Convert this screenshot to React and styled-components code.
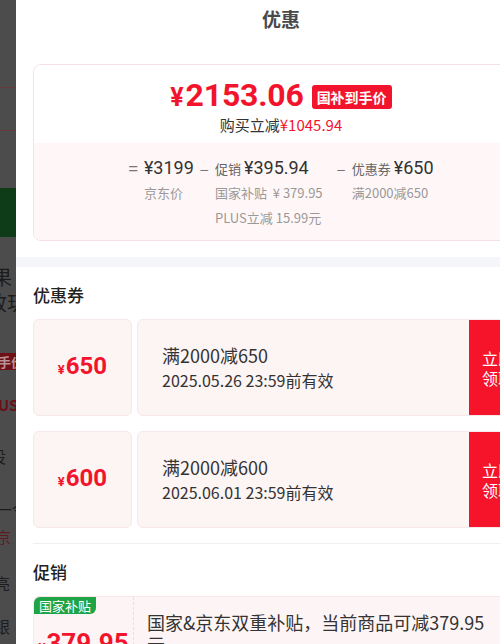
import React from "react";
import styled, { createGlobalStyle } from "styled-components";

const GlobalStyle = createGlobalStyle`
  html, body {
    margin: 0;
    padding: 0;
    background: #fff;
  }
  body {
    width: 500px;
    height: 644px;
    overflow: hidden;
    font-family: "Noto Sans CJK SC", "Noto Sans", sans-serif;
    color: #333;
  }
  * { box-sizing: border-box; }
`;

const RED = "#f2142c";

const coupons = [
  { id: 1, amount: "650", rule: "满2000减650", expire: "2025.05.26 23:59前有效" },
  { id: 2, amount: "600", rule: "满2000减600", expire: "2025.06.01 23:59前有效" },
];

const stripItems = [
  { id: "l1", kind: "line", mt: 87 },
  { id: "l2", kind: "line", mt: 42 },
  { id: "g", kind: "block", mt: 57, h: 49, bg: "#0e3b18" },
  { id: "t1", kind: "text", mt: 28, x: -8, text: "果" },
  { id: "t2", kind: "text", mt: 2, x: -13, text: "致玥" },
  { id: "r", kind: "tag", mt: 38, x: -10, text: "手价" },
  { id: "t3", kind: "text", mt: 26, x: -2, text: "US", color: "#6b1017", size: 15, bold: true },
  { id: "t4", kind: "text", mt: 33, x: -10, text: "设", size: 16 },
  { id: "t5", kind: "text", mt: 35, x: -4, text: "一令", size: 16 },
  { id: "t6", kind: "text", mt: 10, x: -4, text: "京", color: "#5e1c21", size: 15 },
  { id: "t7", kind: "text", mt: 28, x: -6, text: "亮", size: 16 },
  { id: "t8", kind: "text", mt: 25, x: -6, text: "银", size: 16 },
];

export default function App() {
  return (
    <>
      <GlobalStyle />
      <Page>
        <Strip>
          {stripItems.map((it) => {
            if (it.kind === "line") return <StripLine key={it.id} $mt={it.mt} />;
            if (it.kind === "block")
              return <StripBlock key={it.id} $mt={it.mt} $h={it.h} $bg={it.bg} />;
            if (it.kind === "tag")
              return (
                <StripTag key={it.id} $mt={it.mt} $x={it.x}>
                  {it.text}
                </StripTag>
              );
            return (
              <StripText
                key={it.id}
                $mt={it.mt}
                $x={it.x}
                $color={it.color}
                $size={it.size}
                $bold={it.bold}
              >
                {it.text}
              </StripText>
            );
          })}
        </Strip>

        <Panel>
          <Header>优惠</Header>

          <Padded>
            <Summary>
              <SummaryTop>
                <PriceRow>
                  <BigPrice>
                    <BigYen>¥</BigYen>2153.06
                  </BigPrice>
                  <Badge>国补到手价</Badge>
                </PriceRow>
                <ReduceLine>
                  购买立减<em>¥1045.94</em>
                </ReduceLine>
              </SummaryTop>

              <SummaryBottom>
                <Col>
                  <Op>=</Op>
                  <Stack>
                    <MainLine>
                      <Value>¥3199</Value>
                    </MainLine>
                    <SubLine>京东价</SubLine>
                  </Stack>
                </Col>
                <Col>
                  <Op>–</Op>
                  <Stack>
                    <MainLine>
                      <Label>促销</Label>
                      <Value>¥395.94</Value>
                    </MainLine>
                    <SubLine>国家补贴&nbsp;&nbsp;¥ 379.95</SubLine>
                    <SubLine>PLUS立减 15.99元</SubLine>
                  </Stack>
                </Col>
                <Col $ml={8}>
                  <Op>–</Op>
                  <Stack>
                    <MainLine>
                      <Label>优惠券</Label>
                      <Value>¥650</Value>
                    </MainLine>
                    <SubLine>满2000减650</SubLine>
                  </Stack>
                </Col>
              </SummaryBottom>
            </Summary>
          </Padded>

          <Band />

          <Padded>
            <SectionTitle>优惠券</SectionTitle>
            <CouponList>
              {coupons.map((c) => (
                <Coupon key={c.id}>
                  <CouponLeft>
                    <Amount>
                      <small>¥</small>
                      {c.amount}
                    </Amount>
                  </CouponLeft>
                  <CouponMain>
                    <CouponInfo>
                      <Rule>{c.rule}</Rule>
                      <Expire>{c.expire}</Expire>
                    </CouponInfo>
                    <ClaimButton>
                      立即
                      <br />
                      领取
                    </ClaimButton>
                  </CouponMain>
                </Coupon>
              ))}
            </CouponList>

            <Divider />

            <SectionTitle>促销</SectionTitle>
            <PromoCard>
              <PromoLeft>
                <GreenTag>国家补贴</GreenTag>
                <Amount $big>
                  <small>¥</small>379.95
                </Amount>
              </PromoLeft>
              <PromoText>国家&amp;京东双重补贴，当前商品可减379.95元</PromoText>
            </PromoCard>
          </Padded>
        </Panel>
      </Page>
    </>
  );
}

const Page = styled.div`
  display: flex;
  align-items: flex-start;
  width: 500px;
  height: 644px;
  overflow: hidden;
`;

/* dimmed page behind the drawer */
const Strip = styled.div`
  width: 16px;
  height: 644px;
  flex-shrink: 0;
  background: #4c4c4c;
  display: flex;
  flex-direction: column;
  overflow: hidden;
`;

const StripLine = styled.div`
  flex-shrink: 0;
  height: 1px;
  margin-top: ${(p) => p.$mt}px;
  background: #673a3e;
`;

const StripBlock = styled.div`
  flex-shrink: 0;
  height: ${(p) => p.$h}px;
  margin-top: ${(p) => p.$mt}px;
  background: ${(p) => p.$bg};
`;

const StripText = styled.div`
  flex-shrink: 0;
  margin-top: ${(p) => p.$mt}px;
  margin-left: ${(p) => p.$x}px;
  white-space: nowrap;
  font-size: ${(p) => p.$size || 20}px;
  line-height: ${(p) => (p.$size ? 18 : 24)}px;
  font-weight: ${(p) => (p.$bold ? 700 : 400)};
  color: ${(p) => p.$color || "#1c1c1c"};
`;

const StripTag = styled.div`
  flex-shrink: 0;
  margin-top: ${(p) => p.$mt}px;
  margin-left: ${(p) => p.$x}px;
  width: 40px;
  height: 17px;
  line-height: 17px;
  background: #6e1015;
  color: #b89395;
  font-size: 13px;
  font-weight: 700;
  white-space: nowrap;
  padding-left: 8px;
`;

const Panel = styled.div`
  width: 530px;
  flex-shrink: 0;
  background: #fff;
`;

const Header = styled.div`
  height: 64px;
  padding-top: 5px;
  display: flex;
  justify-content: center;
  font-size: 19px;
  line-height: 27px;
  font-weight: 700;
  color: #4a4a4a;
`;

const Padded = styled.div`
  padding: 0 17px;
`;

const Summary = styled.div`
  border: 1px solid #f7e0e3;
  border-radius: 8px;
  overflow: hidden;
  margin-bottom: 16px;
`;

const SummaryTop = styled.div`
  padding: 13px 0 7px;
  display: flex;
  flex-direction: column;
  align-items: center;
  background: #fff;
`;

const PriceRow = styled.div`
  display: flex;
  align-items: center;
  gap: 8px;
  height: 36px;
`;

const BigPrice = styled.span`
  color: ${RED};
  font-family: Roboto, "Noto Sans", sans-serif;
  font-weight: 700;
  font-size: 32px;
  line-height: 36px;
  letter-spacing: -0.2px;
`;

const BigYen = styled.span`
  font-size: 25px;
  margin-right: 2px;
`;

const Badge = styled.span`
  background: ${RED};
  color: #fff;
  font-size: 14px;
  font-weight: 700;
  height: 24px;
  line-height: 24px;
  padding: 0 5px;
  border-radius: 3px;
  margin-top: 2px;
`;

const ReduceLine = styled.div`
  font-size: 15px;
  line-height: 22px;
  color: #333;

  em {
    font-style: normal;
    color: ${RED};
  }
`;

const SummaryBottom = styled.div`
  background: #fff7f7;
  padding: 12px 0 10px;
  display: flex;
  justify-content: center;
  align-items: flex-start;
  gap: 6px;
`;

const Col = styled.div`
  display: flex;
  align-items: flex-start;
  margin-left: ${(p) => p.$ml || 0}px;
`;

const Op = styled.span`
  font-size: 17px;
  line-height: 25px;
  color: #777;
  margin-right: 6px;
`;

const Stack = styled.div`
  display: flex;
  flex-direction: column;
`;

const MainLine = styled.div`
  display: flex;
  align-items: baseline;
  gap: 3px;
  height: 25px;
  line-height: 25px;
`;

const Label = styled.span`
  font-size: 13px;
  color: #666;
`;

const Value = styled.span`
  font-family: Roboto, "Noto Sans", sans-serif;
  font-size: 18px;
  color: #333;
`;

const SubLine = styled.div`
  font-size: 13px;
  line-height: 25px;
  color: #999;
  white-space: nowrap;
`;

const Band = styled.div`
  height: 10px;
  background: #f5f6fa;
`;

const SectionTitle = styled.div`
  padding-top: 17px;
  margin-bottom: 13px;
  font-size: 17px;
  line-height: 22px;
  font-weight: 500;
  color: #222;
`;

const CouponList = styled.div`
  display: flex;
  flex-direction: column;
  gap: 15px;
`;

const Coupon = styled.div`
  display: flex;
  gap: 5px;
  height: 97px;
`;

const CouponLeft = styled.div`
  width: 99px;
  flex-shrink: 0;
  display: flex;
  align-items: center;
  justify-content: center;
  background: #fdf4f4;
  border: 1px solid #f7e7e8;
  border-radius: 6px;
`;

const Amount = styled.div`
  color: ${RED};
  font-family: Roboto, "Noto Sans", sans-serif;
  font-weight: 700;
  font-size: ${(p) => (p.$big ? 26 : 24)}px;
  line-height: 30px;

  small {
    font-size: 13px;
    margin-right: 1px;
  }
`;

const CouponMain = styled.div`
  flex: 1;
  display: flex;
  background: #fdf4f4;
  border: 1px solid #f7e7e8;
  border-radius: 6px;
  overflow: hidden;
`;

const CouponInfo = styled.div`
  flex: 1;
  padding-left: 24px;
  display: flex;
  flex-direction: column;
  justify-content: center;
`;

const Rule = styled.div`
  font-size: 18px;
  line-height: 25px;
  color: #333;
`;

const Expire = styled.div`
  font-size: 16px;
  line-height: 25px;
  color: #333;
`;

const ClaimButton = styled.button`
  width: 59px;
  flex-shrink: 0;
  border: none;
  background: #f5142a;
  color: #fff;
  font-family: inherit;
  font-size: 16px;
  line-height: 20px;
  padding: 0 0 0 13px;
  text-align: left;
`;

const Divider = styled.div`
  height: 1px;
  background: #efefef;
  margin-top: 15px;
`;

const PromoCard = styled.div`
  display: flex;
  background: #fdf5f5;
  border: 1px solid #f7e7e8;
  border-radius: 6px;
  height: 120px;
`;

const PromoLeft = styled.div`
  width: 100px;
  flex-shrink: 0;
  display: flex;
  flex-direction: column;
  align-items: center;
  border-right: 1px dashed #f0dcdd;
`;

const GreenTag = styled.div`
  align-self: flex-start;
  background: #1fa347;
  color: #fff;
  font-size: 13px;
  line-height: 17px;
  padding: 0 5px;
  border-radius: 6px 0 6px 0;
  margin-bottom: 14px;
`;

const PromoText = styled.div`
  flex: 1;
  padding: 14px 36px 0 13px;
  font-size: 18px;
  line-height: 22px;
  color: #333;
`;
